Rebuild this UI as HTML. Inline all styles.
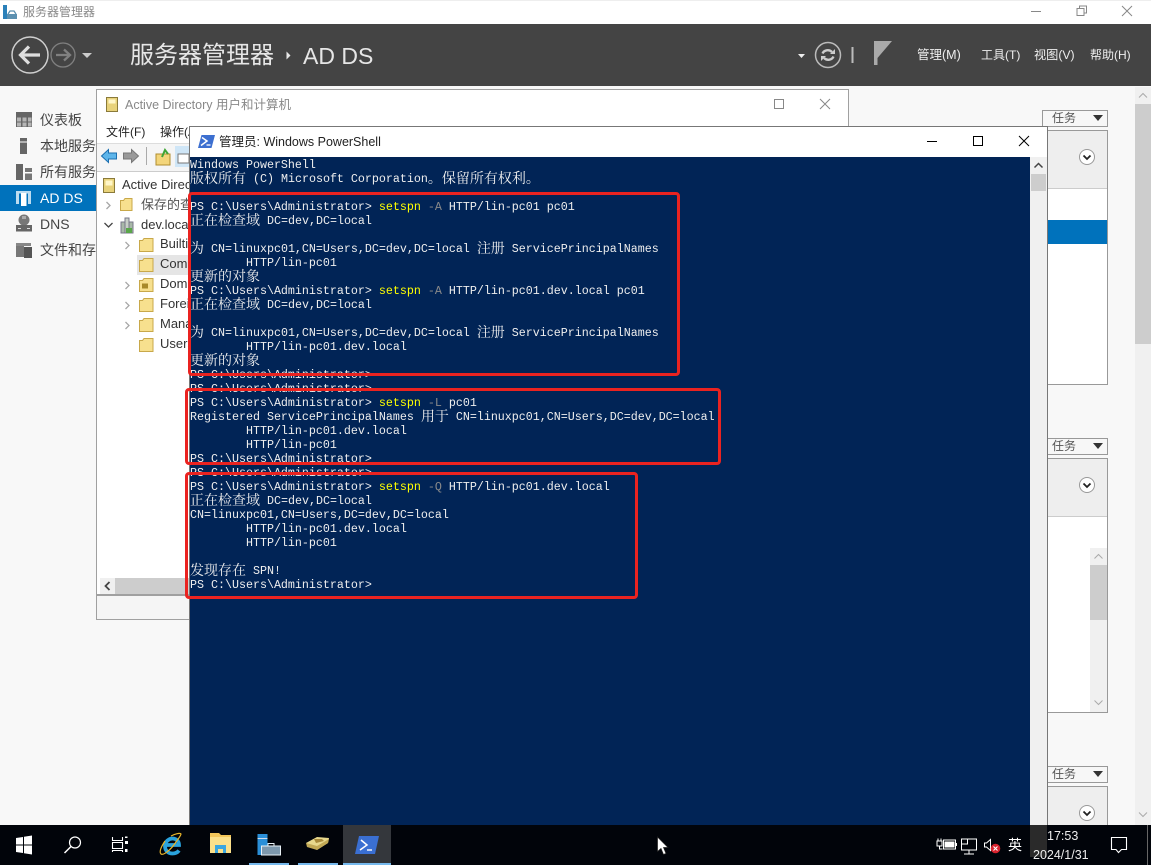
<!DOCTYPE html>
<html><head><meta charset="utf-8">
<style>
html,body{margin:0;padding:0}
body{width:1151px;height:865px;overflow:hidden;position:relative;background:#f8f8f8;font-family:"Liberation Sans","Noto Sans CJK SC",sans-serif}
div,svg,span.a{position:absolute}
.t{white-space:nowrap;line-height:16px;font-size:12.5px;color:#333}
.nav{left:40px;font-size:14px;color:#444;white-space:nowrap;line-height:18px;width:56px;overflow:hidden}
.tree{font-size:13px;color:#333;white-space:nowrap;line-height:16px}
#con{left:190px;top:157px;width:840px;height:668px;background:#012456;overflow:hidden}
#in{left:0;top:1px;width:840px;height:667px}
.l{position:absolute;left:0;height:14px;line-height:14px;white-space:pre;font-family:"Liberation Mono",monospace;font-size:11.67px;color:#eee}
.l b{font-weight:normal;font-family:"Noto Serif CJK SC","Noto Sans CJK SC",serif;font-size:14px;line-height:14px;display:inline-block;height:14px;vertical-align:top;position:relative;top:-1px}
.y{color:#ff0}.g{color:#8a8a8a}
.box{position:absolute;border:3px solid #ea2320;border-radius:4px;box-sizing:border-box}
.task{left:1042px;width:66px;height:17px;box-sizing:border-box;border:1px solid #999;background:#f7f7f7}
.panel{left:1048px;width:60px;box-sizing:border-box;border:1px solid #999;border-left:0;background:#fff}
.phead{left:0;top:0;width:59px;background:#eee;border-bottom:1px solid #ccc}
.wb{fill:none;stroke:#888;stroke-width:1}
</style></head><body>

<!-- top title bar -->
<div style="left:0;top:0;width:1151px;height:24px;background:#fff;border-top:1px solid #eee;box-sizing:border-box"></div>
<svg style="left:2px;top:3px" width="16" height="17" viewBox="0 0 16 17"><path d="M1 2h4v14H1z" fill="#2a80b9"/><path d="M5 11h10v5H5z" fill="#5c90b0"/><path d="M6 11l2-3h4l2 3" fill="none" stroke="#5c90b0" stroke-width="1.300"/></svg>
<div class="t" style="left:23px;top:4px;font-size:12px;color:#888">服务器管理器</div>
<svg style="left:1030px;top:3px" width="121" height="18"><path d="M1 8.500h10" stroke="#888" fill="none"/><path d="M47 5.500h7v7h-7zM49.500 5.500v-2.500h7v7h-2.500" class="wb"/><path d="M92 3l10 10M102 3l-10 10" class="wb"/></svg>

<!-- header -->
<div style="left:0;top:24px;width:1151px;height:62px;background:#444"></div>
<svg style="left:10px;top:35px" width="90" height="40" viewBox="0 0 90 40">
<circle cx="20" cy="20" r="18" fill="none" stroke="#cfcfcf" stroke-width="1.500"/>
<path d="M10 20h20M19 11.500l-8.500 8.500 8.500 8.500" fill="none" stroke="#dedede" stroke-width="3.200"/>
<circle cx="53" cy="20" r="12" fill="none" stroke="#808080" stroke-width="1.300"/>
<path d="M46 20h14M54 14.500l6 5.500-6 5.500" fill="none" stroke="#808080" stroke-width="2.300"/>
<path d="M72 18h10l-5 5z" fill="#ccc"/></svg>
<div style="left:130px;top:38px;font-size:24px;line-height:36px;color:#e6e6e6;white-space:nowrap">服务器管理器</div>
<svg style="left:285px;top:50px" width="8" height="11"><path d="M1.500 1.500l4 4-4 4z" fill="#e8e8e8"/></svg>
<div style="left:303px;top:38px;font-size:23px;line-height:36px;color:#e6e6e6;white-space:nowrap">AD DS</div>
<svg style="left:795px;top:40px" width="110" height="30" viewBox="0 0 110 30">
<path d="M3 14h7l-3.500 4z" fill="#eee"/>
<circle cx="33" cy="15" r="12.500" fill="none" stroke="#bbb" stroke-width="1.500"/>
<path d="M27.500 13.500c1.500-3.500 6.500-4.500 9.500-1.500M38.500 16.500c-1.500 3.500-6.500 4.500-9.500 1.500" fill="none" stroke="#ccc" stroke-width="2.300"/>
<path d="M35 14h5V9zM31 16h-5v5z" fill="#ccc"/>
<path d="M57.500 7v16" stroke="#bbb" stroke-width="2"/>
<path d="M79 1h3.500v24H79z" fill="#aaa"/><path d="M82.500 1H97L82.500 18z" fill="#aaa"/>
</svg>
<div class="t" style="left:917px;top:47px;color:#eee;font-size:12.500px">管理(M)</div>
<div class="t" style="left:981px;top:47px;color:#eee;font-size:12px">工具(T)</div>
<div class="t" style="left:1034px;top:47px;color:#eee;font-size:12.200px">视图(V)</div>
<div class="t" style="left:1090px;top:47px;color:#eee;font-size:12px">帮助(H)</div>

<!-- left nav -->
<div style="left:0;top:185px;width:96px;height:26px;background:#0072bc"></div>
<svg style="left:15px;top:110px" width="20" height="150" viewBox="0 0 20 150">
<path d="M1 2h16v15H1z" fill="#666"/><path d="M2 7.500h4v4H2zM7.500 7.500h4v4h-4zM13 7.500h3.500v4H13zM2 12.500h4v4H2zM7.500 12.500h4v4h-4zM13 12.500h3.500v4H13z" fill="#b5b5b5"/>
<path d="M5 28h7v16H5z" fill="#666"/><path d="M5 31.500h7v1H5z" fill="#fff"/>
<path d="M1 54h7v16H1z" fill="#666"/><path d="M10 58h7v12h-7z" fill="#777"/><path d="M10 62h7v1.500H10z" fill="#fff"/>
<path d="M1 81h15v2.500H1zM1 83h3v11H1zM13 83h3v11h-3z" fill="#bcdcf0"/><path d="M6 83h5.500v13H6z" fill="#fff"/>
<circle cx="9" cy="110" r="5.500" fill="#777"/><path d="M7 106h4v3H7z" fill="#aaa"/><path d="M1 115h16v6.500H1z" fill="#666"/><path d="M3 118h3v1H3zM12 118h3v1h-3z" fill="#ddd"/>
<path d="M1 133h8v14H1z" fill="#777"/><path d="M1 133h15v3H1z" fill="#888"/><path d="M9 137h8v11H9z" fill="#555"/>
</svg>
<div class="nav" style="top:111px">仪表板</div>
<div class="nav" style="top:137px">本地服务器</div>
<div class="nav" style="top:163px">所有服务器</div>
<div class="nav" style="top:189px;color:#fff">AD DS</div>
<div class="nav" style="top:215px">DNS</div>
<div class="nav" style="top:241px">文件和存储</div>

<!-- right side panels -->
<div style="left:1135px;top:87px;width:16px;height:738px;background:#f0f0f0"></div>
<div style="left:1135px;top:104px;width:16px;height:240px;background:#cdcdcd"></div>
<svg style="left:1135px;top:87px" width="16" height="17"><path d="M4 10.500l4-4 4 4" fill="none" stroke="#aaa"/></svg>
<svg style="left:1135px;top:806px" width="16" height="17"><path d="M4 6.500l4 4 4-4" fill="none" stroke="#aaa"/></svg>

<div class="task" style="top:110px"></div>
<div class="t" style="left:1052px;top:110px;font-size:12px;color:#555">任务</div>
<svg style="left:1092px;top:115px" width="12" height="7"><path d="M1 0h10L6 6z" fill="#333"/></svg>
<div class="panel" style="top:130px;height:255px"><div class="phead" style="height:57px"></div>
<div style="left:0;top:89px;width:59px;height:24px;background:#0072bc"></div></div>
<svg style="left:1078px;top:148px" width="18" height="18"><circle cx="9" cy="9" r="7.500" fill="#fff" stroke="#999"/><path d="M5.500 7.500L9 11l3.500-3.500" fill="none" stroke="#222" stroke-width="1.800"/></svg>

<div class="task" style="top:438px"></div>
<div class="t" style="left:1052px;top:438px;font-size:12px;color:#555">任务</div>
<svg style="left:1092px;top:443px" width="12" height="7"><path d="M1 0h10L6 6z" fill="#333"/></svg>
<div class="panel" style="top:458px;height:255px"><div class="phead" style="height:57px"></div>
<div style="left:42px;top:89px;width:17px;height:164px;background:#f0f0f0"></div>
<div style="left:42px;top:106px;width:17px;height:55px;background:#cdcdcd"></div></div>
<svg style="left:1090px;top:548px" width="17" height="17"><path d="M4.500 10.500l4-4 4 4" fill="none" stroke="#aaa"/></svg>
<svg style="left:1090px;top:694px" width="17" height="17"><path d="M4.500 6.500l4 4 4-4" fill="none" stroke="#aaa"/></svg>
<svg style="left:1078px;top:476px" width="18" height="18"><circle cx="9" cy="9" r="7.500" fill="#fff" stroke="#999"/><path d="M5.500 7.500L9 11l3.500-3.500" fill="none" stroke="#222" stroke-width="1.800"/></svg>

<div class="task" style="top:766px"></div>
<div class="t" style="left:1052px;top:766px;font-size:12px;color:#555">任务</div>
<svg style="left:1092px;top:771px" width="12" height="7"><path d="M1 0h10L6 6z" fill="#333"/></svg>
<div class="panel" style="top:786px;height:60px"><div class="phead" style="height:57px"></div></div>
<svg style="left:1078px;top:804px" width="18" height="18"><circle cx="9" cy="9" r="7.500" fill="#fff" stroke="#999"/><path d="M5.500 7.500L9 11l3.500-3.500" fill="none" stroke="#222" stroke-width="1.800"/></svg>

<!-- AD window -->
<div style="left:96px;top:89px;width:753px;height:531px;box-sizing:border-box;border:1px solid #a0a0a0;background:#fff"></div>
<svg style="left:106px;top:97px" width="13" height="15"><path d="M.5.500h11v14H.5z" fill="#e8d27a" stroke="#8a7a3a"/><path d="M2.500 2.500h7v4h-7z" fill="#fff6c8"/></svg>
<div class="t" style="left:125px;top:97px;color:#888;font-size:12.500px">Active Directory 用户和计算机</div>
<svg style="left:770px;top:96px" width="70" height="16"><path d="M4.500 3.500h9v9h-9zM50 3l10 10M60 3L50 13" class="wb"/></svg>
<div class="t" style="left:106px;top:124px;font-size:12px;color:#222">文件(F)</div>
<div class="t" style="left:160px;top:124px;font-size:12px;color:#222">操作(A)</div>
<div style="left:97px;top:143px;width:92px;height:28px;background:#f5f5f5;border-top:1px solid #ddd"></div>
<svg style="left:100px;top:146px" width="90" height="22">
<path d="M1.500 10l7-6.500V7h8v6h-8v3.500z" fill="#5db5ea" stroke="#1c6fb0"/>
<path d="M38.500 10l-7-6.500V7h-8v6h8v3.500z" fill="#999" stroke="#777"/>
<path d="M46.500 1v18" stroke="#aaa"/>
<path d="M56 8h14v11H56z" fill="#f3d57a" stroke="#b08d2e"/><path d="M62 11l3-7 3 4" fill="none" stroke="#3fa535" stroke-width="2"/>
<path d="M75 0h15v21H75z" fill="#cfe6f7"/><path d="M78 8h11v9H78z" fill="#fff" stroke="#777"/>
</svg>
<div style="left:97px;top:171px;width:92px;height:407px;background:#fff;border-top:1px solid #ccc;box-sizing:border-box"></div>
<div style="left:137px;top:255px;width:52px;height:20px;background:#e5e5e5"></div>
<svg style="left:96px;top:170px" width="93" height="190" viewBox="0 0 93 190">
<path d="M7.500 8.500h11v14h-11z" fill="#e8d27a" stroke="#8a7a3a"/><path d="M9.500 10.500h7v5h-7z" fill="#fff6c8"/>
<path d="M10.500 32l3.500 3.500-3.500 3.500" fill="none" stroke="#a6a6a6" stroke-width="1.300"/>
<path d="M8.500 53l4 4 4-4" fill="none" stroke="#444" stroke-width="1.300"/>
<path d="M29.500 72l3.500 3.500-3.500 3.500M29.500 112l3.500 3.500-3.500 3.500M29.500 132l3.500 3.500-3.500 3.500M29.500 152l3.500 3.500-3.500 3.500" fill="none" stroke="#a6a6a6" stroke-width="1.300"/>
<path d="M24.500 30.500h3l1.500-2h7v12h-11.500z" fill="#f7e08e" stroke="#c8a84a"/>
<path d="M25 52h5v11h-5zM32 52h5v11h-5z" fill="#a8b8a8" stroke="#778"/><path d="M29 48h4v15h-4z" fill="#c8d0c8" stroke="#778"/><path d="M30 58h6v5h-6z" fill="#5aa64a"/>
<g fill="#f7e08e" stroke="#c8a84a"><path d="M43.500 70.500h3l1.500-2h9v13h-13.500z"/><path d="M43.500 90.500h3l1.500-2h9v13h-13.500z"/><path d="M43.500 110.500h3l1.500-2h9v13h-13.500z"/><path d="M43.500 130.500h3l1.500-2h9v13h-13.500z"/><path d="M43.500 150.500h3l1.500-2h9v13h-13.500z"/><path d="M43.500 170.500h3l1.500-2h9v13h-13.500z"/></g><path d="M46 113.500h6v5h-6z" fill="#a88a2a"/>
</svg>
<div class="tree" style="left:122px;top:177px">Active Directory</div>
<div class="tree" style="left:141px;top:197px;color:#555">保存的查询</div>
<div class="tree" style="left:141px;top:217px">dev.local</div>
<div class="tree" style="left:160px;top:236px">Builtin</div>
<div class="tree" style="left:160px;top:256px">Computers</div>
<div class="tree" style="left:160px;top:276px">Domain</div>
<div class="tree" style="left:160px;top:296px">Foreign</div>
<div class="tree" style="left:160px;top:316px">Managed</div>
<div class="tree" style="left:160px;top:336px">Users</div>
<div style="left:100px;top:578px;width:89px;height:16px;background:#f0f0f0"></div>
<div style="left:115px;top:578px;width:74px;height:16px;background:#cdcdcd"></div>
<svg style="left:100px;top:578px" width="15" height="16"><path d="M9.500 4l-4 4 4 4" fill="none" stroke="#444" stroke-width="1.800"/></svg>
<div style="left:96px;top:594px;width:93px;height:1.500px;background:#a0a0a0"></div>
<div style="left:97px;top:596px;width:92px;height:23px;background:#f5f5f5"></div>

<!-- PowerShell window -->
<div style="left:189px;top:126px;width:859px;height:699px;box-sizing:border-box;border:1px solid #777;background:#f0f0f0"></div>
<div style="left:190px;top:127px;width:857px;height:30px;background:#fff"></div>
<svg style="left:198px;top:134px" width="17" height="15"><path d="M3.500 1H17l-3.500 13H0z" fill="#3c6fd0"/><path d="M4 3.500L9 7l-6 4.500" fill="none" stroke="#fff" stroke-width="1.500"/><path d="M8.500 11h4" stroke="#fff" stroke-width="1.300"/></svg>
<div class="t" style="left:219px;top:134px;font-size:12.500px;color:#222">管理员: Windows PowerShell</div>
<svg style="left:925px;top:133px" width="110" height="16"><path d="M2 8.500h10" stroke="#000" fill="none"/><path d="M48.500 3.500h9v9h-9z" fill="none" stroke="#000" stroke-width="1"/><path d="M94 3l10 10M104 3L94 13" stroke="#000" fill="none"/></svg>
<div style="left:1030px;top:157px;width:17px;height:668px;background:#f0f0f0"></div>
<div style="left:1031px;top:174px;width:15px;height:17px;background:#cdcdcd"></div>
<svg style="left:1030px;top:158px" width="17" height="16"><path d="M4.500 9.500l4-4 4 4" fill="none" stroke="#444" stroke-width="1.500"/></svg>

<div id="con"><div id="in">
<div class="l" style="top:0">Windows PowerShell</div>
<div class="l" style="top:14px"><b>版权所有</b> (C) Microsoft Corporation<b>。保留所有权利。</b></div>
<div class="l" style="top:42px">PS C:\Users\Administrator&gt; <span class="y">setspn</span> <span class="g">-A</span> HTTP/lin-pc01 pc01</div>
<div class="l" style="top:56px"><b>正在检查域</b> DC=dev,DC=local</div>
<div class="l" style="top:84px"><b>为</b> CN=linuxpc01,CN=Users,DC=dev,DC=local <b>注册</b> ServicePrincipalNames</div>
<div class="l" style="top:98px">        HTTP/lin-pc01</div>
<div class="l" style="top:112px"><b>更新的对象</b></div>
<div class="l" style="top:126px">PS C:\Users\Administrator&gt; <span class="y">setspn</span> <span class="g">-A</span> HTTP/lin-pc01.dev.local pc01</div>
<div class="l" style="top:140px"><b>正在检查域</b> DC=dev,DC=local</div>
<div class="l" style="top:168px"><b>为</b> CN=linuxpc01,CN=Users,DC=dev,DC=local <b>注册</b> ServicePrincipalNames</div>
<div class="l" style="top:182px">        HTTP/lin-pc01.dev.local</div>
<div class="l" style="top:196px"><b>更新的对象</b></div>
<div class="l" style="top:210px">PS C:\Users\Administrator&gt;</div>
<div class="l" style="top:224px">PS C:\Users\Administrator&gt;</div>
<div class="l" style="top:238px">PS C:\Users\Administrator&gt; <span class="y">setspn</span> <span class="g">-L</span> pc01</div>
<div class="l" style="top:252px">Registered ServicePrincipalNames <b>用于</b> CN=linuxpc01,CN=Users,DC=dev,DC=local</div>
<div class="l" style="top:266px">        HTTP/lin-pc01.dev.local</div>
<div class="l" style="top:280px">        HTTP/lin-pc01</div>
<div class="l" style="top:294px">PS C:\Users\Administrator&gt;</div>
<div class="l" style="top:308px">PS C:\Users\Administrator&gt;</div>
<div class="l" style="top:322px">PS C:\Users\Administrator&gt; <span class="y">setspn</span> <span class="g">-Q</span> HTTP/lin-pc01.dev.local</div>
<div class="l" style="top:336px"><b>正在检查域</b> DC=dev,DC=local</div>
<div class="l" style="top:350px">CN=linuxpc01,CN=Users,DC=dev,DC=local</div>
<div class="l" style="top:364px">        HTTP/lin-pc01.dev.local</div>
<div class="l" style="top:378px">        HTTP/lin-pc01</div>
<div class="l" style="top:406px"><b>发现存在</b> SPN!</div>
<div class="l" style="top:420px">PS C:\Users\Administrator&gt;</div>
</div></div>

<!-- red boxes -->
<div class="box" style="left:188px;top:192px;width:492px;height:184px"></div>
<div class="box" style="left:185px;top:388px;width:536px;height:77px"></div>
<div class="box" style="left:185px;top:472px;width:453px;height:127px"></div>

<!-- taskbar -->
<div style="left:0;top:825px;width:1151px;height:40px;background:#01040a"></div>
<div style="left:1030px;top:825px;width:17px;height:32px;background:#2a2a2a"></div>
<div style="left:343px;top:825px;width:48px;height:40px;background:#34373c"></div>
<div style="left:249px;top:863px;width:40px;height:2px;background:#76b9ed"></div>
<div style="left:298px;top:863px;width:40px;height:2px;background:#76b9ed"></div>
<div style="left:343px;top:863px;width:48px;height:2px;background:#76b9ed"></div>
<svg style="left:0;top:825px" width="400" height="40" viewBox="0 0 400 40">
<path d="M16 13l7-1v7.500h-7zM24 11.800l8-1.300v9h-8zM16 20.500h7V28l-7-1zM24 20.500h8v9l-8-1.300z" fill="#fff"/>
<circle cx="75" cy="17.500" r="5.500" fill="none" stroke="#fff" stroke-width="1.200"/><path d="M71 21.500L64.500 28" stroke="#fff" stroke-width="1.500"/>
<path d="M112.500 12v3.500h10V12M112.500 17.500h10v6h-10zM112.500 27v-1.500h10V27" fill="none" stroke="#fff" stroke-width="1.100"/><path d="M125 11.500h2.500v1.500H125zM125 16h3v3h-3zM125 24h2.500v3H125z" fill="#fff"/>
<path d="M165.500 20h13.500c0-4-3-6.500-6.500-6.500s-7.500 3-7.500 7.500 3 7.500 7.500 7.500c3 0 5-1 6.500-3" fill="none" stroke="#2aa3dd" stroke-width="3.800"/>
<path d="M165 16c-4 6-6 11-4 13 2 1.500 9-3 15-12 3-4 5-7 5-8-1-1.500-6 0-10 2" fill="none" stroke="#e8b52a" stroke-width="1.200"/>
<path d="M210 8h9l2 2h10v9h-21z" fill="#f3c65a"/><path d="M210 12h21v16h-21z" fill="#fbe08a"/><path d="M215 20h11v8h-3v-4h-5v4h-3z" fill="#3aa6e0"/>
<path d="M257.500 9h10v21h-10z" fill="#2a8fd8"/><path d="M257.500 13h10v1h-10z" fill="#cde"/>
<path d="M261.500 21h19v9h-19z" fill="#7d98ad" stroke="#e8f0f5"/><path d="M268 21v-2.500h6V21" fill="none" stroke="#e8f0f5"/>
<path d="M306 18l11-6 12 1-1 5-11 7z" fill="#e7d88d"/><path d="M306 18l11 3 12-7-1 4-11 7-10-3z" fill="#c2a955"/><path d="M314 14l8 0 2 2-8 2z" fill="#a88a3a"/>
<path d="M359 11h20l-4 18h-20z" fill="#3a6fd2"/><path d="M361 15l6 5-7 5" fill="none" stroke="#fff" stroke-width="1.500"/><path d="M367 25h5" stroke="#fff" stroke-width="1.400"/>
</svg>
<svg style="left:655px;top:836px" width="14" height="20"><path d="M2.500 1v14.500l3.500-3 2.500 6 2.500-1-2.500-6H13z" fill="#fff" stroke="#222" stroke-width=".7"/></svg>
<svg style="left:935px;top:835px" width="70" height="22" viewBox="0 0 70 22">
<path d="M8.500 5h12v9h-12z" fill="none" stroke="#fff"/><path d="M9.500 6.500h10v6h-10z" fill="#fff"/><path d="M21 8h1v3h-1z" fill="#fff"/><path d="M2 6h5v5H2zM3 3.500v2M6 3.500v2M4.500 11v3h3" fill="none" stroke="#fff"/>
<path d="M26.500 4h15v11h-15zM34 15v4M29 19h10" fill="none" stroke="#fff"/><path d="M26.500 4h6v5h-6z" fill="#01040a" stroke="#fff"/>
<path d="M49.500 8v4h2l4 3.500V4.500l-4 3.500z" fill="none" stroke="#fff"/><circle cx="60.500" cy="13.500" r="4.800" fill="#d9232e"/><path d="M58.500 11.500l4 4M62.500 11.500l-4 4" stroke="#fff" stroke-width="1.100"/>
</svg>
<div style="left:1008px;top:837px;font-size:14px;line-height:16px;color:#fff">英</div>
<div style="left:1047px;top:828px;font-size:12.500px;line-height:16px;color:#eee;white-space:nowrap">17:53</div>
<div style="left:1033px;top:847px;font-size:12.500px;line-height:16px;color:#eee;white-space:nowrap">2024/1/31</div>
<svg style="left:1110px;top:835px" width="20" height="20"><path d="M1.500 2.500h15v12h-5l-3 3-2.500-3H1.500z" fill="none" stroke="#fff" stroke-width="1.100"/></svg>
<div style="left:1147px;top:825px;width:1px;height:40px;background:#666"></div>

</body></html>
